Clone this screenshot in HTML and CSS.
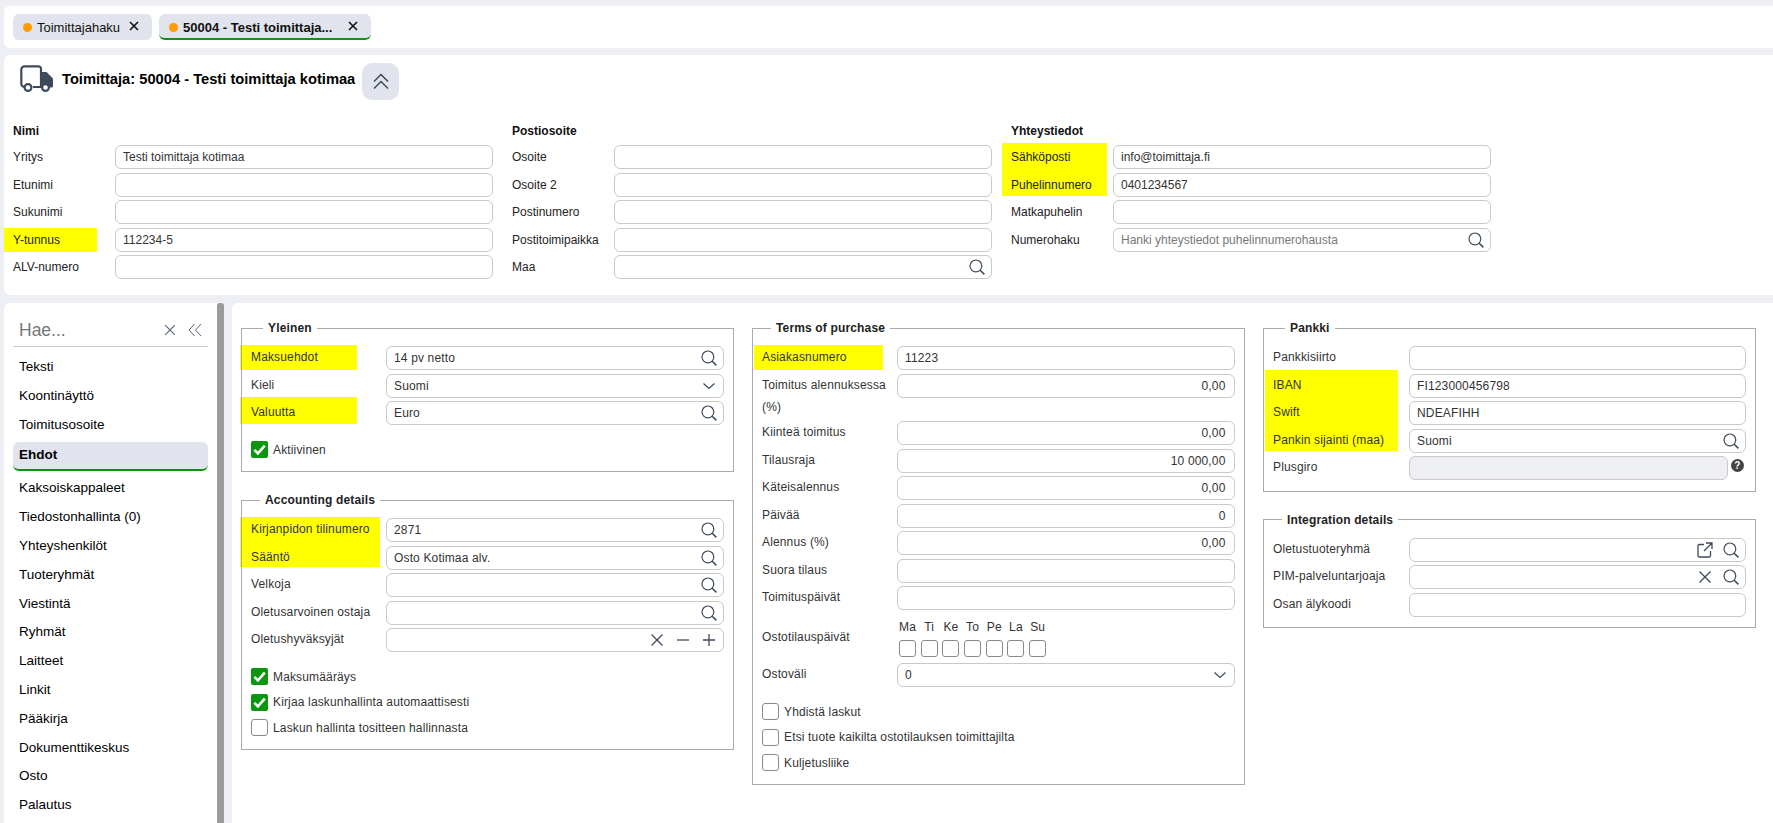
FILE: index.html
```html
<!DOCTYPE html>
<html lang="fi">
<head>
<meta charset="utf-8">
<title>Toimittaja</title>
<link rel="stylesheet" href="styles.css">
</head>
<body>
<svg class="sprite" aria-hidden="true">
  <symbol id="i-search" viewBox="0 0 16 16"><circle cx="6.9" cy="6.9" r="5.9" fill="none" stroke="currentColor" stroke-width="1.2"/><path d="M11.2 11.2 15.4 15.4" fill="none" stroke="currentColor" stroke-width="1.5"/></symbol>
  <symbol id="i-x" viewBox="0 0 16 16"><path d="M2.5 2.5 13.5 13.5M13.5 2.5 2.5 13.5" fill="none" stroke="currentColor" stroke-width="1.3"/></symbol>
  <symbol id="i-minus" viewBox="0 0 16 16"><path d="M2 8H14" fill="none" stroke="currentColor" stroke-width="1.3"/></symbol>
  <symbol id="i-plus" viewBox="0 0 16 16"><path d="M2 8H14M8 2V14" fill="none" stroke="currentColor" stroke-width="1.3"/></symbol>
  <symbol id="i-down" viewBox="0 0 16 16"><path d="M2.5 5.5 8 10.5 13.5 5.5" fill="none" stroke="currentColor" stroke-width="1.2"/></symbol>
  <symbol id="i-ext" viewBox="0 0 16 16"><path d="M7 2.5H2.2A1.2 1.2 0 0 0 1 3.7V13.8A1.2 1.2 0 0 0 2.2 15H12.3A1.2 1.2 0 0 0 13.5 13.8V9M9 1H15V7M15 1 7 9" fill="none" stroke="currentColor" stroke-width="1.3"/></symbol>
  <symbol id="i-check" viewBox="0 0 17 17"><path d="M3.4 8.800 6.900 12.300 13.800 4.600" fill="none" stroke="#fff" stroke-width="2.600"/></symbol>
</svg>

<nav class="tabbar">
  <div class="tab"><span class="dot"></span><span class="tab-text">Toimittajahaku</span><svg class="tab-x" viewBox="0 0 10 10"><path d="M1 1 9 9M9 1 1 9"/></svg></div>
  <div class="tab tab-active"><span class="dot"></span><span class="tab-text">50004 - Testi toimittaja...</span><svg class="tab-x" viewBox="0 0 10 10"><path d="M1 1 9 9M9 1 1 9"/></svg></div>
</nav>

<header class="panel head">
  <div class="title-row">
    <svg class="truck" viewBox="0 0 34 27">
      <path d="M9 22H4.5A3.2 3.2 0 0 1 1.300 18.800V4.500A3.200 3.200 0 0 1 4.500 1.300H18.500A2.500 2.500 0 0 1 21 3.800V22H13" fill="none" stroke="#3d4a5c" stroke-width="2.200"/>
      <path d="M21 7H26.500L33 13.500V21A1.500 1.500 0 0 1 31.500 22.500H21Z" fill="#3d4a5c"/>
      <circle cx="8" cy="22.500" r="3.400" fill="#fff" stroke="#3d4a5c" stroke-width="2.200"/>
      <circle cx="25.500" cy="22.500" r="3.400" fill="#fff" stroke="#3d4a5c" stroke-width="2.200"/>
    </svg>
    <h1 class="title">Toimittaja: 50004 - Testi toimittaja kotimaa</h1>
    <button class="collapse" type="button"><svg viewBox="0 0 18 18"><path d="M2 8.500 9 1.500 16 8.500M2 15.500 9 8.500 16 15.500"/></svg></button>
  </div>
  <div class="head-form">
    <section class="head-col">
      <h2 class="head-title">Nimi</h2>
      <div class="row"><label>Yritys</label><div class="inp">Testi toimittaja kotimaa</div></div>
      <div class="row"><label>Etunimi</label><div class="inp"></div></div>
      <div class="row"><label>Sukunimi</label><div class="inp"></div></div>
      <div class="row"><label class="hl hl-y">Y-tunnus</label><div class="inp">112234-5</div></div>
      <div class="row"><label>ALV-numero</label><div class="inp"></div></div>
    </section>
    <section class="head-col">
      <h2 class="head-title">Postiosoite</h2>
      <div class="row"><label>Osoite</label><div class="inp"></div></div>
      <div class="row"><label>Osoite 2</label><div class="inp"></div></div>
      <div class="row"><label>Postinumero</label><div class="inp"></div></div>
      <div class="row"><label>Postitoimipaikka</label><div class="inp"></div></div>
      <div class="row"><label>Maa</label><div class="inp"><span class="val"></span><svg class="ic"><use href="#i-search"/></svg></div></div>
    </section>
    <section class="head-col">
      <h2 class="head-title">Yhteystiedot</h2>
      <div class="row"><label class="hl hl-contact">Sähköposti</label><div class="inp">info@toimittaja.fi</div></div>
      <div class="row"><label>Puhelinnumero</label><div class="inp">0401234567</div></div>
      <div class="row"><label>Matkapuhelin</label><div class="inp"></div></div>
      <div class="row"><label>Numerohaku</label><div class="inp"><span class="val ph">Hanki yhteystiedot puhelinnumerohausta</span><svg class="ic"><use href="#i-search"/></svg></div></div>
    </section>
  </div>
</header>

<div class="workspace">
  <aside class="side">
    <div class="side-search"><span class="side-ph">Hae...</span><svg class="side-ic side-x"><use href="#i-x"/></svg><svg class="side-ic" viewBox="0 0 14 14"><path d="M6.500 1 1 7 6.500 13M13 1 7.500 7 13 13" fill="none" stroke="currentColor" stroke-width="1"/></svg></div>
    <ul class="side-list">
      <li>Teksti</li>
      <li>Koontinäyttö</li>
      <li>Toimitusosoite</li>
      <li class="side-active">Ehdot</li>
      <li>Kaksoiskappaleet</li>
      <li>Tiedostonhallinta (0)</li>
      <li>Yhteyshenkilöt</li>
      <li>Tuoteryhmät</li>
      <li>Viestintä</li>
      <li>Ryhmät</li>
      <li>Laitteet</li>
      <li>Linkit</li>
      <li>Pääkirja</li>
      <li>Dokumenttikeskus</li>
      <li>Osto</li>
      <li>Palautus</li>
    </ul>
  </aside>
  <div class="scroll-thumb"></div>
  <main class="panel body-panel">
    <div class="body-col">
      <fieldset class="fs">
        <legend class="lg-wide">Yleinen</legend>
        <div class="row"><label class="hl hl-term">Maksuehdot</label><div class="inp"><span class="val">14 pv netto</span><svg class="ic"><use href="#i-search"/></svg></div></div>
        <div class="row"><label>Kieli</label><div class="inp"><span class="val">Suomi</span><svg class="ic"><use href="#i-down"/></svg></div></div>
        <div class="row"><label class="hl hl-cur">Valuutta</label><div class="inp"><span class="val">Euro</span><svg class="ic"><use href="#i-search"/></svg></div></div>
        <div class="checks">
          <div class="check"><span class="box on"><svg><use href="#i-check"/></svg></span>Aktiivinen</div>
        </div>
      </fieldset>
      <fieldset class="fs">
        <legend>Accounting details</legend>
        <div class="row"><label class="hl hl-acc">Kirjanpidon tilinumero</label><div class="inp"><span class="val">2871</span><svg class="ic"><use href="#i-search"/></svg></div></div>
        <div class="row"><label>Sääntö</label><div class="inp"><span class="val">Osto Kotimaa alv.</span><svg class="ic"><use href="#i-search"/></svg></div></div>
        <div class="row"><label>Velkoja</label><div class="inp"><span class="val"></span><svg class="ic"><use href="#i-search"/></svg></div></div>
        <div class="row"><label>Oletusarvoinen ostaja</label><div class="inp"><span class="val"></span><svg class="ic"><use href="#i-search"/></svg></div></div>
        <div class="row"><label>Oletushyväksyjät</label><div class="inp"><span class="val"></span><svg class="ic"><use href="#i-x"/></svg><svg class="ic"><use href="#i-minus"/></svg><svg class="ic"><use href="#i-plus"/></svg></div></div>
        <div class="checks">
          <div class="check"><span class="box on"><svg><use href="#i-check"/></svg></span>Maksumääräys</div>
          <div class="check"><span class="box on"><svg><use href="#i-check"/></svg></span>Kirjaa laskunhallinta automaattisesti</div>
          <div class="check"><span class="box"></span>Laskun hallinta tositteen hallinnasta</div>
        </div>
      </fieldset>
    </div>
    <div class="body-col">
      <fieldset class="fs">
        <legend>Terms of purchase</legend>
        <div class="row"><label class="hl hl-asia">Asiakasnumero</label><div class="inp">11223</div></div>
        <div class="row row-tall"><label>Toimitus alennuksessa (%)</label><div class="inp num">0,00</div></div>
        <div class="row"><label>Kiinteä toimitus</label><div class="inp num">0,00</div></div>
        <div class="row"><label>Tilausraja</label><div class="inp num">10 000,00</div></div>
        <div class="row"><label>Käteisalennus</label><div class="inp num">0,00</div></div>
        <div class="row"><label>Päivää</label><div class="inp num">0</div></div>
        <div class="row"><label>Alennus (%)</label><div class="inp num">0,00</div></div>
        <div class="row"><label>Suora tilaus</label><div class="inp"></div></div>
        <div class="row"><label>Toimituspäivät</label><div class="inp"></div></div>
        <div class="row row-days"><label>Ostotilauspäivät</label>
          <div class="days">
            <span>Ma</span><span>Ti</span><span>Ke</span><span>To</span><span>Pe</span><span>La</span><span>Su</span>
            <span class="box"></span><span class="box"></span><span class="box"></span><span class="box"></span><span class="box"></span><span class="box"></span><span class="box"></span>
          </div>
        </div>
        <div class="row"><label>Ostoväli</label><div class="inp"><span class="val">0</span><svg class="ic"><use href="#i-down"/></svg></div></div>
        <div class="checks">
          <div class="check"><span class="box"></span>Yhdistä laskut</div>
          <div class="check"><span class="box"></span>Etsi tuote kaikilta ostotilauksen toimittajilta</div>
          <div class="check"><span class="box"></span>Kuljetusliike</div>
        </div>
      </fieldset>
    </div>
    <div class="body-col body-col-bank">
      <fieldset class="fs fs-tight">
        <legend class="lg-wide">Pankki</legend>
        <div class="row"><label>Pankkisiirto</label><div class="inp"></div></div>
        <div class="row"><label class="hl hl-bank">IBAN</label><div class="inp">FI123000456798</div></div>
        <div class="row"><label>Swift</label><div class="inp">NDEAFIHH</div></div>
        <div class="row"><label>Pankin sijainti (maa)</label><div class="inp"><span class="val">Suomi</span><svg class="ic"><use href="#i-search"/></svg></div></div>
        <div class="row"><label>Plusgiro</label><div class="inp inp-off"></div><span class="help">?</span></div>
      </fieldset>
      <fieldset class="fs fs-tight">
        <legend>Integration details</legend>
        <div class="row"><label>Oletustuoteryhmä</label><div class="inp"><span class="val"></span><svg class="ic"><use href="#i-ext"/></svg><svg class="ic"><use href="#i-search"/></svg></div></div>
        <div class="row"><label>PIM-palveluntarjoaja</label><div class="inp"><span class="val"></span><svg class="ic"><use href="#i-x"/></svg><svg class="ic"><use href="#i-search"/></svg></div></div>
        <div class="row"><label>Osan älykoodi</label><div class="inp"></div></div>
      </fieldset>
    </div>
  </main>
</div>
</body>
</html>
```
FILE: styles.css
```css
* { box-sizing: border-box; }
html, body { margin: 0; height: 823px; overflow: hidden; }
body {
  background: #eeeff4;
  font-family: "Liberation Sans", Arial, sans-serif;
  font-size: 12px;
  color: #222;
}
.sprite { position: absolute; width: 0; height: 0; }

.panel { background: #fff; isolation: isolate; }

/* tabs */
.tabbar {
  display: flex;
  gap: 7px;
  height: 42px;
  margin: 6px 0 7px 4px;
  padding: 8px 9px;
  background: #fff;
  border-radius: 6px 0 0 6px;
}
.tab {
  display: flex;
  align-items: center;
  width: 139px;
  height: 26px;
  padding: 0 6px 0 10px;
  background: #e1e4ec;
  border-radius: 6px;
  color: #111;
  font-size: 13px;
}
.tab-active {
  width: 212px;
  border-bottom: 2px solid #0a960f;
  font-weight: bold;
  padding-top: 2px;
}
.dot { width: 9px; height: 9px; border-radius: 50%; background: #ff9c00; flex: none; margin-right: 5px; }
.tab-text { flex: 1; white-space: nowrap; }
.tab-x { width: 10px; height: 10px; flex: none; margin: -2px 7px 0 0; fill: none; stroke: #111; stroke-width: 1.6; }

/* head */
.head { margin-left: 4px; height: 240px; padding: 8px 0 0 9px; border-radius: 6px 0 0 6px; }
.title-row { display: flex; align-items: flex-start; height: 37px; margin-bottom: 20px; }
.truck { width: 34px; height: 27px; margin: 2px 8px 0 7px; flex: none; }
.title { margin: 0 7px 0 0; font-size: 14.7px; line-height: 33px; font-weight: bold; color: #000; white-space: nowrap; }
.collapse {
  width: 37px;
  height: 37px;
  padding: 0;
  border: 0;
  border-radius: 10px;
  background: #e1e4ec;
  display: flex;
  align-items: center;
  justify-content: center;
}
.collapse svg { width: 18px; height: 18px; fill: none; stroke: #3d4a5c; stroke-width: 1.5; }
.head-form { display: grid; grid-template-columns: repeat(3, 499px); }
.head-title { margin: 0; height: 25px; font-size: 12px; line-height: 22px; font-weight: bold; color: #111; }
.head-col .row label { width: 102px; line-height: 25px; }
.head-col .inp { width: 378px; flex: none; padding-left: 7px; }

/* rows */
.row { display: flex; height: 27.5px; }
.row label { position: relative; flex: none; width: 135px; line-height: 23px; }
.inp {
  flex: 1;
  min-width: 0;
  height: 24px;
  display: flex;
  align-items: center;
  padding: 0 6px 0 7px;
  background: #fff;
  border: 1px solid #c9c9c9;
  border-radius: 6px;
  color: #333;
  white-space: nowrap;
}
.num { justify-content: flex-end; padding-right: 8px; }
.val { flex: 1; min-width: 0; }
.ph { color: #777; }
.ic { width: 16px; height: 16px; flex: none; margin-left: 10px; color: #3d4a5c; }
.inp-off { flex: none; width: 319px; background: #eeeff2; }
.help {
  flex: none;
  width: 13px;
  height: 13px;
  margin: 3px 0 0 3px;
  border-radius: 50%;
  background: #444;
  color: #fff;
  font-size: 10px;
  font-weight: bold;
  line-height: 13px;
  text-align: center;
}
.row-tall { height: 47.5px; }
.row-tall label { line-height: 22px; }
.row-days { height: 49.5px; }
.row-days label { line-height: 47px; }
.days {
  display: grid;
  grid-template-columns: repeat(7, 17px);
  column-gap: 4.7px;
  row-gap: 5px;
  justify-items: center;
  align-content: start;
  padding: 5.5px 0 0 2px;
  line-height: 16px;
  color: #333;
}

/* highlights */
.hl::before {
  content: "";
  position: absolute;
  z-index: -1;
  background: #ffff00;
  left: var(--l, -11px);
  top: var(--t, -1px);
  width: var(--w);
  height: var(--h, 25px);
}
.hl-y { --l: -9px; --t: 0px; --w: 93px; --h: 24px; }
.hl-contact { --l: -9px; --t: -2px; --w: 105px; --h: 53px; }
.hl-term { --w: 117px; }
.hl-cur { --t: -4px; --w: 117px; --h: 27px; }
.hl-acc { --w: 140px; --h: 50px; }
.hl-asia { --l: -8px; --w: 129px; }
.hl-bank { --l: -8px; --t: -4px; --w: 133px; --h: 81px; }

/* workspace */
.workspace { display: flex; height: 520px; margin-top: 8px; }
.side { flex: none; width: 213px; margin-left: 4px; background: #fff; border-radius: 6px 0 0 0; overflow: hidden; }
.side-search {
  display: flex;
  align-items: center;
  height: 44px;
  margin: 0 9px;
  padding: 11px 6px 0 6px;
  border-bottom: 1px solid #ccc;
  color: #56627a;
}
.side-ph { flex: 1; font-size: 17.5px; color: #777; }
.side-ic { width: 14px; height: 14px; flex: none; }
.side-x { margin-right: 11px; }
.side-list { list-style: none; margin: 5px 0 0; padding: 0 9px; font-size: 13.5px; color: #000; }
.side-list li { height: 28.8px; line-height: 29px; padding-left: 6px; white-space: nowrap; }
.side-list .side-active {
  height: 29px;
  margin: 4px 0 2px;
  background: #e1e4ec;
  border-bottom: 2px solid #0a960f;
  border-radius: 6px;
  font-weight: bold;
  line-height: 25px;
}
.scroll-thumb { flex: none; width: 7px; background: #9b9b9b; border-radius: 3px 3px 0 0; }
.body-panel {
  flex: 1;
  margin-left: 8px;
  padding: 17px 0 0 9px;
  border-radius: 6px 0 0 0;
  display: grid;
  grid-template-columns: repeat(3, 492.5px);
  column-gap: 18.5px;
  align-items: start;
}
.body-col { display: flex; flex-direction: column; gap: 20px; }
.body-col-bank .row label { width: 136px; }
.fs {
  margin: 0;
  min-width: 0;
  padding: 10px 9px 13px;
  border: 1px solid #aaa;
  letter-spacing: 0.15px;
}
.fs-tight { padding-bottom: 7px; }
.fs legend {
  margin-left: 9px;
  padding: 0 5px;
  font-size: 12px;
  line-height: 16px;
  font-weight: bold;
  color: #222;
}
.fs legend.lg-wide { margin-left: 12px; }
.fs label { color: #333; }
.fs .row-tall label { padding-right: 4px; }

/* checks */
.checks { display: flex; flex-direction: column; gap: 8.5px; margin-top: 12.5px; }
.check { display: flex; align-items: center; height: 17px; color: #333; white-space: nowrap; }
.box {
  flex: none;
  width: 17px;
  height: 17px;
  border: 1px solid #8a8a8a;
  border-radius: 3px;
  background: #fff;
}
.check .box { margin-right: 5px; }
.box.on { border: 0; background: #0a960f; border-radius: 2px; }
.box svg { display: block; width: 17px; height: 17px; }
```
